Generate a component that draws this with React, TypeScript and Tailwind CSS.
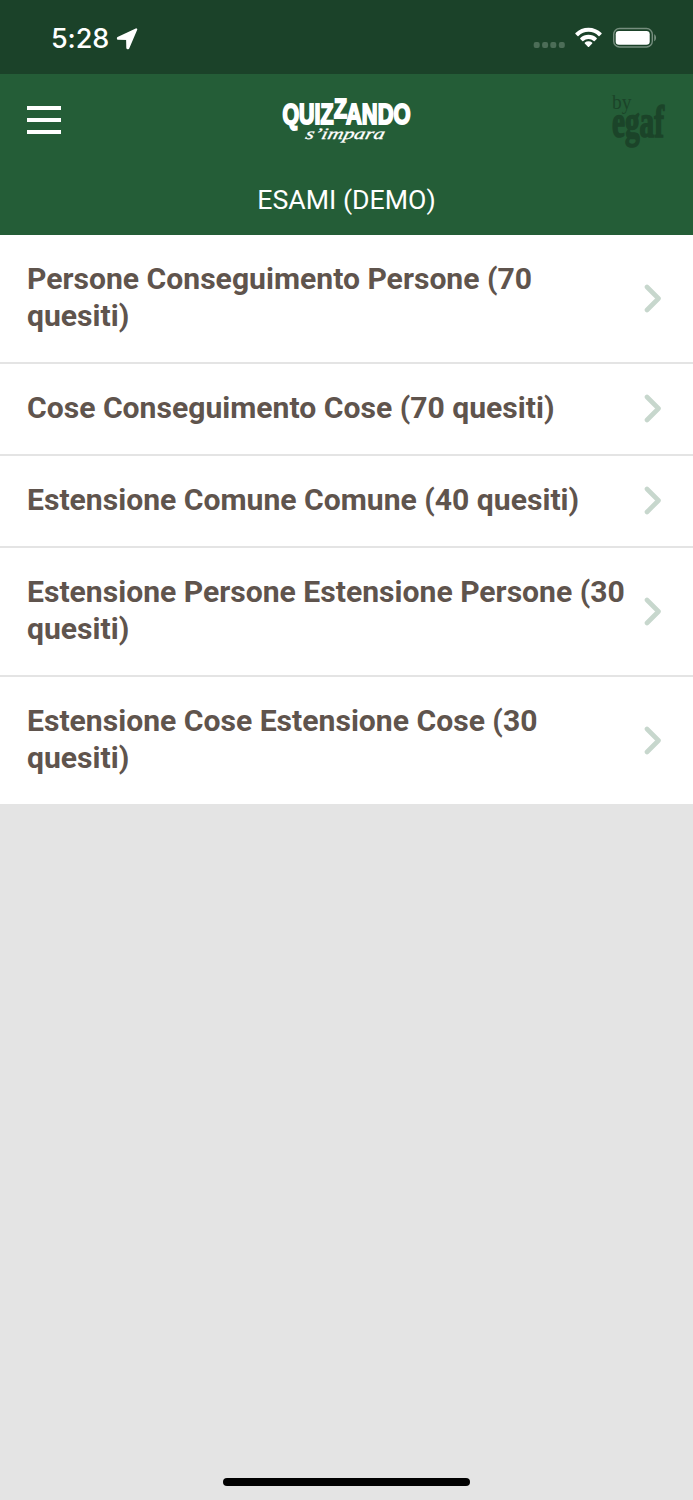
const exams = [
  { title: "Persone Conseguimento Persone (70 quesiti)", size: "h-[129px] pb-0.5" },
  { title: "Cose Conseguimento Cose (70 quesiti)", size: "h-[92px] pb-0.5" },
  { title: "Estensione Comune Comune (40 quesiti)", size: "h-[92px] pb-0.5" },
  { title: "Estensione Persone Estensione Persone (30 quesiti)", size: "h-[129px] pb-0.5" },
  { title: "Estensione Cose Estensione Cose (30 quesiti)", size: "h-[127px] pb-0.5" },
];

function StatusBar() {
  return (
    <div className="flex h-[74px] items-start justify-between bg-[#1b4229] pr-[35px] pl-[51px] text-white">
      <div className="flex items-center pt-[20px]">
        <span className="w-[58px] pt-px font-['Inter',sans-serif] text-[27px] leading-9 font-medium tracking-[-0.1px] whitespace-nowrap">5:28</span>
        <svg className="ml-[7px] h-[22px] w-[22px]" viewBox="0 0 22 22" fill="currentColor" stroke="currentColor" strokeWidth="2.2" strokeLinejoin="round">
          <path d="M20.2 1.4 2 9.9v.8l9.2.2.2 9.2h.8Z" />
        </svg>
      </div>
      <div className="flex pt-[27px]">
        <svg className="h-[22px] w-[32px]" viewBox="0 0 32 22" fill="#4c6d57">
          <rect x="0.7" y="15" width="6" height="6" rx="2" />
          <rect x="9.1" y="15" width="6" height="6" rx="2" />
          <rect x="17.3" y="15" width="6" height="6" rx="2" />
          <rect x="25.8" y="15" width="6" height="6" rx="2" />
        </svg>
        <svg className="ml-[10px] h-[22px] w-[27px]" viewBox="0 0 27 22" fill="currentColor">
          <path d="M13.5.7c5 0 9.6 2 13 5.2.3.3.3.7 0 1l-2 2c-.3.3-.7.3-1 0a14.2 14.2 0 0 0-20 0c-.3.3-.7.3-1 0l-2-2c-.3-.3-.3-.7 0-1A18.7 18.7 0 0 1 13.5.7Z" />
          <path d="M13.5 7.7c3.2 0 6 1.2 8.2 3.2.3.3.3.7 0 1l-2 2c-.3.3-.7.3-1 0a7.7 7.7 0 0 0-10.4 0c-.3.3-.7.3-1 0l-2-2c-.3-.3-.3-.7 0-1a12 12 0 0 1 8.2-3.2Z" />
          <path d="M13.5 14.3c1.4 0 2.6.4 3.6 1.2.4.3.4.7.1 1l-3.1 3.3c-.4.4-.8.4-1.2 0l-3.1-3.3c-.3-.3-.3-.7.1-1 1-.8 2.2-1.2 3.6-1.2Z" />
        </svg>
        <svg className="ml-[10px] h-[22px] w-[46px]" viewBox="0 0 46 22">
          <rect x="1.7" y="1.5" width="38.6" height="18.5" rx="5.8" fill="none" stroke="#768e7e" strokeWidth="1.4" />
          <rect x="3.7" y="4" width="34" height="13.7" rx="3.3" fill="white" />
          <path d="M42.2 7.3c2.5 1.2 2.5 5.8 0 7Z" fill="#768e7e" />
        </svg>
      </div>
    </div>
  );
}

function QuizzandoLogo() {
  return (
    <svg
      className="h-[60px] w-[140px] overflow-visible"
      viewBox="0 0 140 60"
      fill="white"
      fontFamily="'Liberation Sans', sans-serif"
      fontWeight="700"
    >
      <g stroke="white" strokeWidth="2" fontSize="29">
        <text x="5.5" y="34" textLength="51" lengthAdjust="spacingAndGlyphs">QUIZ</text>
        <text x="69" y="34" textLength="64.5" lengthAdjust="spacingAndGlyphs">ANDO</text>
        <text x="57" y="27.5" fontSize="28" textLength="13" lengthAdjust="spacingAndGlyphs">Z</text>
      </g>
      <text
        x="28"
        y="49"
        transform="translate(12 0) skewX(-14)"
        fontFamily="'Liberation Serif', serif"
        fontSize="16"
        fontStyle="italic"
        fontWeight="400"
        stroke="white"
        strokeWidth="0.3"
        textLength="79"
        lengthAdjust="spacingAndGlyphs"
      >
        s’impara
      </text>
    </svg>
  );
}

function EgafLogo() {
  return (
    <svg
      className="h-[60px] w-[60px] overflow-visible"
      viewBox="0 0 60 60"
      fill="#1b4429"
      fontFamily="'Liberation Serif', serif"
    >
      <text x="4" y="19" fontSize="20" textLength="19.5" lengthAdjust="spacingAndGlyphs">by</text>
      <text x="4" y="47" fontSize="47" fontWeight="700" stroke="#1b4429" strokeWidth="1.7" textLength="52" lengthAdjust="spacingAndGlyphs">
        egaf
      </text>
    </svg>
  );
}

export default function App() {
  return (
    <div className="flex h-[1500px] w-full flex-col bg-[#e4e4e4] font-['Roboto',sans-serif]">
      <StatusBar />
      <header className="flex h-[161px] flex-col bg-[#245d37] text-white">
        <div className="flex h-[92px] items-center justify-between pr-[25px] pl-[27px]">
          <button aria-label="Menu" className="flex w-[59px] flex-col gap-2">
            <span className="h-[4px] w-[34px] bg-white" />
            <span className="h-[4px] w-[34px] bg-white" />
            <span className="h-[4px] w-[34px] bg-white" />
          </button>
          <QuizzandoLogo />
          <EgafLogo />
        </div>
        <h1 className="pt-[16px] text-center text-[26.7px] leading-9 font-normal">ESAMI (DEMO)</h1>
      </header>
      <ul className="bg-white text-[#5f544d]">
        {exams.map(({ title, size }) => (
          <li key={title} className={`${size} flex items-center justify-between border-b-2 border-[#e4e4e4] pr-[30px] pl-[27px] last:border-b-0`}>
            <span className="w-[604px] pb-px text-[30.12px] leading-[37px] font-bold">{title}</span>
            <svg className="h-[30px] w-[20px] shrink-0" viewBox="0 0 20 30" fill="none" stroke="#c7d7cd" strokeWidth="4.6" strokeLinecap="round" strokeLinejoin="round">
              <path d="m4 4 11.5 11.5L4 27" />
            </svg>
          </li>
        ))}
      </ul>
      <div className="mx-auto mt-auto mb-[14px] h-[8px] w-[247px] rounded-full bg-black" />
    </div>
  );
}
